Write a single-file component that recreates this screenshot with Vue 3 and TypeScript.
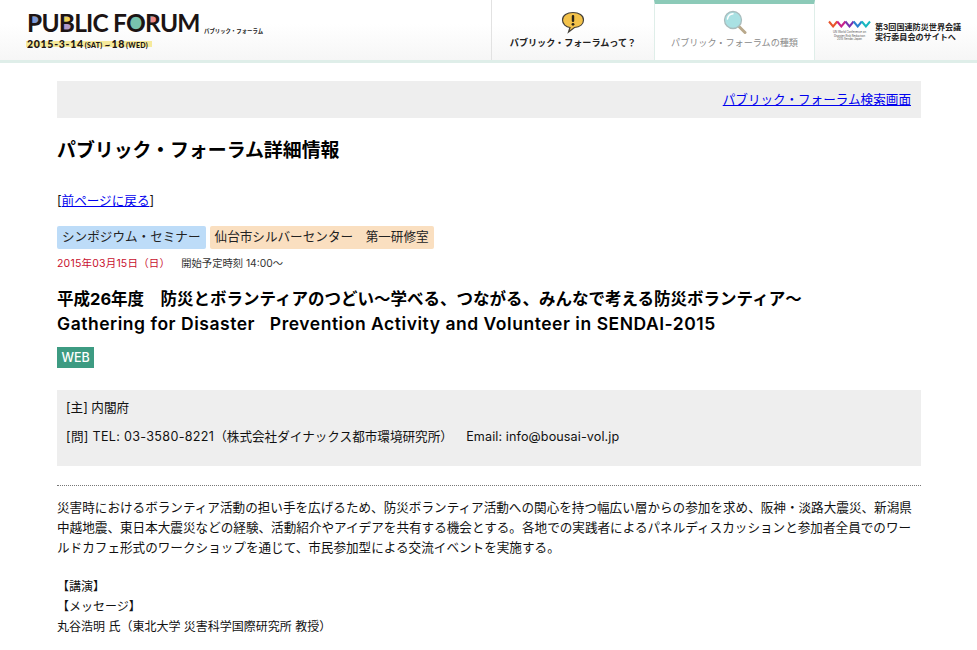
<script setup lang="ts">
const waves: string[] = ['#e8552c', '#c8208c', '#7a32b0', '#2a80d0', '#18b8c0']
function wavePath(i: number): string {
  const x = 1 + i * 8.2
  return `M${x} 1.5 L${x + 4.1} 6.500 L${x + 8.2} 1.5`
}
</script>

<template>
  <div class="page">
    <header class="header">
      <div class="logo">
        <div class="logo-top">
          <div class="logo-name">
            <span class="logo-word"><span class="ltr">P<i class="dot dot-p"></i></span>U<span class="ltr">B<i class="dot dot-b1"></i><i class="dot dot-b2"></i></span>LIC F<span class="ltr">O<i class="dot dot-o"></i></span><span class="ltr">R<i class="dot dot-r"></i></span>UM</span>
          </div>
          <span class="logo-kana">パブリック・フォーラム</span>
        </div>
        <div class="logo-date">
          <span class="big">2015-3-14</span><span class="small">(SAT)</span><span class="tilde">~</span><span class="big">18</span><span class="small">(WED)</span>
        </div>
      </div>
      <nav class="nav">
        <a class="nav-item">
          <svg class="nav-icon" width="24" height="24" viewBox="0 0 24 24">
            <path d="M12 2.500C6 2.500 1.500 5.500 1.500 10 1.500 14 5 17 9 17.500L7.500 22 13.500 17.500C19 17 22.500 14 22.500 10 22.500 5.500 18 2.500 12 2.500Z" fill="#f3c24a" stroke="#44403a" stroke-width="1.200"/>
            <rect x="10.800" y="5" width="2.400" height="7" rx="1.100" fill="#2a2418"/>
            <circle cx="12" cy="14.300" r="1.400" fill="#2a2418"/>
          </svg>
          <span class="nav-label">パブリック・フォーラムって？</span>
        </a>
        <a class="nav-item active">
          <svg class="nav-icon" width="24" height="24" viewBox="0 0 24 24">
            <line x1="15" y1="15.500" x2="22" y2="22.500" stroke="#b9a98c" stroke-width="3" stroke-linecap="round"/>
            <circle cx="10" cy="10" r="8.500" fill="#a9e1e3" stroke="#a9bcbd" stroke-width="1.300"/>
            <path d="M4.500 9C5 6 7 4 10 3.800" fill="none" stroke="#fff" stroke-width="1.500" stroke-linecap="round"/>
          </svg>
          <span class="nav-label">パブリック・フォーラムの種類</span>
        </a>
        <a class="nav-link">
          <div class="wcdrr">
            <svg width="43" height="8" viewBox="0 0 43 8">
              <path v-for="(c, i) in waves" :key="c" :d="wavePath(i)" fill="none" :stroke="c" stroke-width="2"/>
            </svg>
            <span class="wcdrr-text">UN World Conference on</span>
            <span class="wcdrr-text">Disaster Risk Reduction</span>
            <span class="wcdrr-text">2015 Sendai Japan</span>
          </div>
          <div class="nav-link-text">第3回国連防災世界会議<br>実行委員会のサイトへ</div>
        </a>
      </nav>
    </header>

    <main class="main">
      <div class="search-bar"><a href="#">パブリック・フォーラム検索画面</a></div>
      <h1 class="title">パブリック・フォーラム詳細情報</h1>
      <p class="back">[<a href="#">前ページに戻る</a>]</p>
      <div class="tags">
        <span class="tag tag-blue">シンポジウム・セミナー</span>
        <span class="tag tag-orange">仙台市シルバーセンター　第一研修室</span>
      </div>
      <p class="when"><span class="date">2015年03月15日（日）</span><span class="start">開始予定時刻 14:00〜</span></p>
      <h2 class="subject">平成26年度　防災とボランティアのつどい〜学べる、つながる、みんなで考える防災ボランティア〜<span class="latin">Gathering for Disaster &nbsp; Prevention Activity and Volunteer in SENDAI-2015</span></h2>
      <div class="web-row"><span class="web">WEB</span></div>
      <div class="info">
        <p>[主] 内閣府</p>
        <p><span class="lat">[問] TEL: 03-3580-8221</span>（株式会社ダイナックス都市環境研究所）　<span class="mail">Email: info@bousai-vol.jp</span></p>
      </div>
      <div class="desc">
        <p>災害時におけるボランティア活動の担い手を広げるため、防災ボランティア活動への関心を持つ幅広い層からの参加を求め、阪神・淡路大震災、新潟県<br>中越地震、東日本大震災などの経験、活動紹介やアイデアを共有する機会とする。各地での実践者によるパネルディスカッションと参加者全員でのワー<br>ルドカフェ形式のワークショップを通じて、市民参加型による交流イベントを実施する。</p>
        <p class="gap">【講演】<br>【メッセージ】<br>丸谷浩明 氏（東北大学 災害科学国際研究所 教授）</p>
      </div>
    </main>
  </div>
</template>

<style>
html, body { margin: 0; background: #fff; overflow: hidden; }
</style>

<style scoped>
.page {
  width: 977px;
  height: 650px;
  overflow: hidden;
  font-family: Inter, "Noto Sans CJK JP", sans-serif;
  font-size: 12.600px;
  line-height: 20px;
  color: #111;
}
.header {
  height: 60px;
  display: flex;
  justify-content: space-between;
  background: linear-gradient(#fff 40%, #f6f6f6);
  border-bottom: 3px solid #dfeee9;
}
.logo { padding: 14px 0 0 27px; }
.logo-top { display: flex; align-items: flex-end; gap: 6px; height: 18px; }
.logo-name { width: 171px; height: 18px; isolation: isolate; }
.logo-word {
  display: block;
  font-family: Lato, sans-serif;
  font-weight: 700;
  font-size: 24.500px;
  line-height: 18px;
  letter-spacing: -0.800px;
  color: #1c1414;
  white-space: nowrap;
}
.ltr { position: relative; }
.dot { position: absolute; display: block; z-index: -1; }
.dot-p { left: 5px; top: 9px; width: 7px; height: 7px; background: #7c9ad8; }
.dot-b1 { left: 5px; top: 9px; width: 7px; height: 6px; background: #f1d35a; }
.dot-b2 { left: 5px; top: 16px; width: 8px; height: 6px; background: #b29bcb; }
.dot-o { left: 3px; top: 8px; width: 14px; height: 14px; background: #78c4ae; border-radius: 50%; }
.dot-r { left: 5px; top: 9px; width: 7px; height: 6px; background: #ee8e8e; }
.logo-kana { font-size: 5.400px; line-height: 8px; margin-bottom: -3px; color: #222; white-space: nowrap; font-weight: 700; }
.logo-date {
  display: inline-flex;
  align-items: baseline;
  height: 6px;
  margin-top: 9px;
  margin-left: -1px;
  padding: 0 3px 0 1px;
  background: #f6ea9c;
  font-family: Lato, sans-serif;
  font-weight: 900;
  line-height: 6px;
  color: #1c1414;
  white-space: nowrap;
}
.big { font-size: 10.500px; letter-spacing: 0.700px; }
.small { font-size: 7px; letter-spacing: 0.300px; margin: 0 1px; }
.tilde { font-size: 10px; margin: 0 1px; }
.nav { display: flex; }
.nav-item {
  width: 163px;
  box-sizing: border-box;
  border-left: 1px solid #e2e2e2;
  padding-top: 10px;
  display: flex;
  flex-direction: column;
  align-items: center;
  gap: 2px;
  color: #222;
}
.nav-item.active {
  background: #fff;
  border-top: 4px solid #8ccab8;
  border-left-color: #dfeee9;
  border-right: 1px solid #dfeee9;
  padding-top: 6px;
  width: 161px;
  color: #8a8a8a;
}
.nav-icon { display: block; }
.nav-label { font-size: 9.100px; line-height: 14px; font-weight: 700; white-space: nowrap; }
.active .nav-label { font-weight: 400; }
.nav-link { width: 162px; display: flex; align-items: flex-start; padding: 20px 0 0 13px; gap: 4px; box-sizing: border-box; }
.wcdrr { width: 43px; display: flex; flex-direction: column; align-items: center; }
.wcdrr svg { display: block; margin-bottom: 3px; }
.wcdrr-text { font-size: 2.800px; line-height: 3.500px; color: #555; white-space: nowrap; }
.nav-link-text { font-size: 8.100px; line-height: 10px; font-weight: 700; color: #222; white-space: nowrap; margin-top: 2px; }
.main { padding: 18px 56px 0 57px; }
.search-bar { background: #eee; height: 37px; line-height: 37px; text-align: right; padding-right: 10px; }
a { color: #00e; }
.search-bar a, .back a { text-decoration: underline; }
.title { font-size: 18.900px; line-height: 26px; font-weight: 700; margin: 20px 0 0; color: #000; }
.back { margin: 28px 0 0; line-height: 18px; }
.tags { display: flex; gap: 4px; margin-top: 16px; }
.tag { height: 23px; line-height: 22px; padding: 0 5px; border-radius: 2px; color: #222; }
.tag-blue { background: #bddcf8; }
.tag-orange { background: #fadfc0; }
.when { margin: 5px 0 0; font-size: 10.500px; line-height: 18px; }
.date { color: #c8102e; letter-spacing: 0.200px; }
.start { margin-left: 11px; color: #333; font-size: 10.300px; }
.subject { font-size: 16.500px; line-height: 25px; font-weight: 700; margin: 14px 0 0; color: #000; white-space: nowrap; }
.latin { display: block; line-height: 24px; font-size: 17.500px; font-weight: 600; letter-spacing: 0.530px; }
.web-row { margin-top: 11px; display: flex; }
.web { background: #3d9b82; color: #fff; font-size: 12.500px; font-weight: 500; height: 21px; line-height: 21px; padding: 0 4.500px; }
.info { background: #eee; height: 76px; margin-top: 22px; padding: 8px 9px 0; box-sizing: border-box; }
.info p { margin: 0 0 9px; line-height: 20px; }
.lat { letter-spacing: 0.300px; }
.mail { margin-left: 7px; letter-spacing: 0.100px; }
.desc { border-top: 1px dotted #777; margin-top: 19px; padding-top: 12px; }
.desc p { margin: 0; white-space: nowrap; }
.desc .gap { margin-top: 19px; font-size: 12px; }
</style>
